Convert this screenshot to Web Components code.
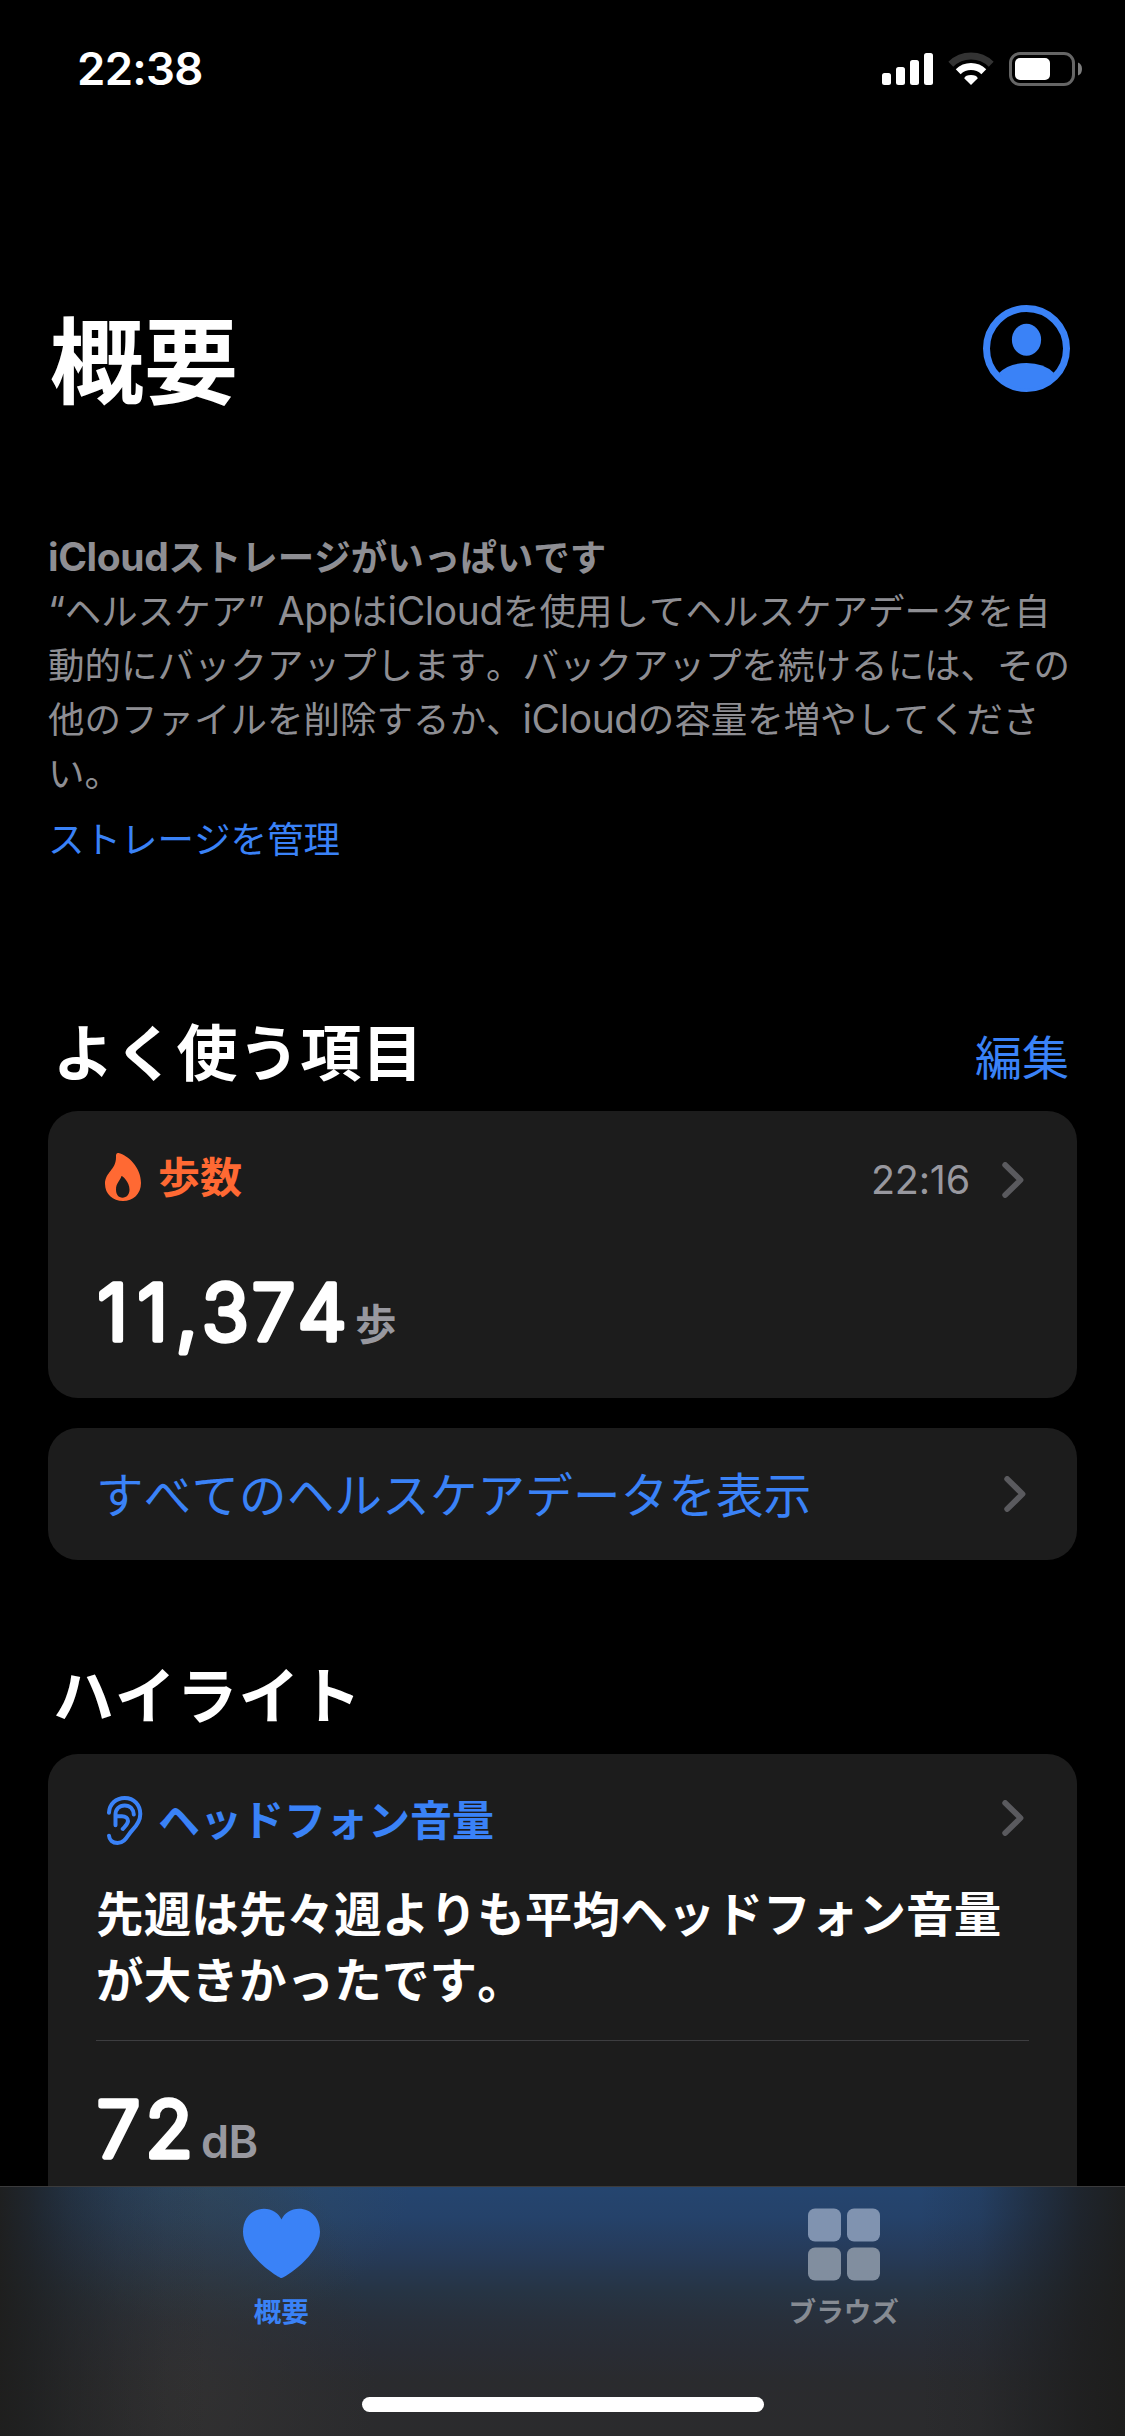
<!DOCTYPE html>
<html lang="ja">
<head>
<meta charset="utf-8">
<title>ヘルスケア</title>
<style>
html,body{margin:0;background:#000}
body{width:1125px;height:2436px;overflow:hidden;color:#fff;font-family:Inter,"Noto Sans CJK JP",sans-serif;font-kerning:none}
</style>
</head>
<body>
<health-app></health-app>
<script>
const define = (name, html) => {
  const t = document.createElement('template');
  t.innerHTML = html;
  customElements.define(name, class extends HTMLElement {
    constructor() {
      super();
      this.attachShadow({mode: 'open'}).append(t.content.cloneNode(true));
    }
  });
};

define('status-bar', `
<style>
:host{display:flex;height:138px;flex:none;align-items:center;justify-content:space-between;padding:0 43px 0 77px;box-sizing:border-box}
time{font-size:45.5px;font-weight:600;letter-spacing:-.7px;line-height:60px}
svg{display:block}
</style>
<time>22:38</time>
<svg width="200" height="34" viewBox="882 52 200 34">
  <g fill="#fff"><rect x="882" y="73" width="9" height="12" rx="2.5"/><rect x="896" y="67" width="9" height="18" rx="2.5"/><rect x="910" y="60" width="9" height="25" rx="2.5"/><rect x="924" y="53" width="9" height="32" rx="2.5"/></g>
  <g fill="none" stroke-width="7"><path stroke="#333" d="M950.8 64.3A29 29 0 0 1 991.2 64.3"/><path stroke="#fff" d="M958.2 71.7A18.4 18.4 0 0 1 983.8 71.7"/></g>
  <path fill="#fff" d="M971 85L964.2 78.2Q965.5 75 971 75T977.8 78.2Z"/>
  <rect x="1010.5" y="53.5" width="63" height="31" rx="9.5" fill="none" stroke="#666" stroke-width="3"/>
  <rect x="1015" y="58" width="35" height="22" rx="5" fill="#fff"/>
  <path fill="#7d7d7d" d="M1078 62.5Q1082 64 1082 69T1078 75.5Z"/>
</svg>`);

define('page-header', `
<style>
:host{display:flex;height:226px;flex:none;padding:0 55px 0 50px;align-items:flex-start;justify-content:space-between;margin-top:167px}
h1{margin:8px 0 0;font-size:94px;line-height:100px;font-weight:700}
</style>
<h1><slot></slot></h1>
<svg width="87" height="87" viewBox="0 0 87 87" fill="#3a82f7">
  <circle cx="43.5" cy="43.5" r="40" fill="none" stroke="#3a82f7" stroke-width="7"/>
  <ellipse cx="43.5" cy="34.8" rx="14.6" ry="16"/>
  <path d="M16 68Q26 58 43.5 58T71 68Q60 84 43.5 84T16 68Z"/>
</svg>`);

define('storage-notice', `
<style>
:host{display:block;flex:none;height:480px;padding:0 48px;font-size:36.5px;line-height:54px;color:#8e8e93;white-space:nowrap}
b,p{display:block;margin:0}
b{font-weight:700}
a{display:block;margin-top:12px;color:#3a82f7}
</style>
<b><slot name="title"></slot></b>
<p><slot></slot></p>
<a><slot name="link"></slot></a>`);

define('section-header', `
<style>
:host{display:flex;flex:none;height:100px;box-sizing:border-box;padding:0 56px 0 53px;justify-content:space-between}
h2{margin:3px 0 0;font-size:61px;line-height:80px;font-weight:700;letter-spacing:.8px}
span{margin-top:17px;font-size:47px;line-height:60px;color:#3a82f7}
</style>
<h2><slot></slot></h2><span><slot name="action"></slot></span>`);

define('health-card', `
<style>
:host{display:block;flex:none;box-sizing:border-box;margin:0 48px;padding:39px 48px 0;background:#1c1c1c;border-radius:30px}
</style><slot></slot>`);

define('disclosure-chevron', `
<style>:host{display:block;flex:none;width:22px;height:36px}svg{display:block}</style>
<svg width="22" height="36" viewBox="0 0 22 36" fill="none" stroke="#5a5a5e" stroke-width="5.8" stroke-linecap="round" stroke-linejoin="round"><path d="M3.2 3L18.5 18L3.2 33"/></svg>`);

define('card-title', `
<style>
:host{display:flex;height:54px;align-items:center;padding-right:5px}
.icon{display:flex;width:62px;padding-left:9px;box-sizing:border-box}
b{font-weight:700;font-size:42px;line-height:54px;flex:1;white-space:nowrap;color:var(--accent);margin-top:2px}
.time{font-size:39.5px;line-height:54px;color:#98989f;margin:5px 32px 0 0;letter-spacing:-.2px}
disclosure-chevron{margin-top:var(--chevron-shift,6px)}
</style>
<span class="icon"><slot name="icon"></slot></span><b><slot></slot></b><span class="time"><slot name="time"></slot></span><disclosure-chevron></disclosure-chevron>`);

define('flame-icon', `
<style>:host,svg{display:block}</style>
<svg width="36" height="48" viewBox="0 0 36 48"><path fill="#ff6933" fill-rule="evenodd" d="M13.5 0C23 2.5 36 14 36 30C36 41 28 48 18 48C8 48 0 41 0 31C0 19 11.5 17 11 3.5C10.8 1 12-.2 13.5 0ZM16.5 23C17.5 22.8 24.5 29 24.5 36.5C24.5 41.5 21.5 44.7 17.5 44.7C13.5 44.7 11 41.5 11 36.5C11 30 15 28 16.5 23Z"/></svg>`);

define('ear-icon', `
<style>:host,svg{display:block}:host{margin-left:2px}</style>
<svg width="36" height="49" viewBox="0 0 36 49" fill="none" stroke="#3a82f7" stroke-width="4" stroke-linecap="round" stroke-linejoin="round"><path d="M2 16.7C2.5 8 9 2 17.7 2C27 2 33.3 9 33.3 18C33.3 25 29.5 30 25 34.5C20.500 39 18.500 47 10.500 47C5.500 47 2.300 44 2 39.700M8.500 29.300V18.500C8.500 13 12.500 9.400 17.700 9.400C23 9.400 26.500 13 26.800 18.500M8.500 20.300H15C18.500 20.300 21 22.300 21 25C21 28.200 17.500 30.500 15.700 33"/></svg>`);

/* Value text: a thin face thickened by a round-joined stroke, for soft terminals. */
customElements.define('metric-value', class extends HTMLElement {
  connectedCallback() {
    const root = this.attachShadow({mode: 'open'});
    const w = this.getAttribute('width');
    root.innerHTML = `
<style>
:host{display:flex;height:80px;align-items:flex-start}
svg{display:block;overflow:visible}
text{font:300 77px Inter;fill:#fff;stroke:#fff;stroke-width:5.4px;stroke-linejoin:round;stroke-linecap:round}
span{font-size:var(--unit-size,41.5px);line-height:54px;font-weight:var(--unit-weight,700);color:#98989f;margin-top:var(--unit-top,24px);letter-spacing:-.5px}
</style>
<svg width="${w}" height="80"><text x="${this.getAttribute('xs')}" y="65.500">${this.getAttribute('value')}</text></svg><span><slot></slot></span>`;
  }
});

define('tab-item', `
<style>
:host{display:flex;flex:1;flex-direction:column;align-items:center;padding-top:21px;color:var(--tint)}
.i{height:73px}
b{margin-top:12px;font-size:27.6px;line-height:38px;font-weight:700}
</style>
<span class="i"><slot name="icon"></slot></span><b><slot></slot></b>`);

define('tab-bar', `
<style>
:host{display:flex;flex:none;flex-direction:column;align-items:center;height:250px;box-sizing:border-box;border-top:1px solid #3b3b3c;
background:
 linear-gradient(90deg,rgba(30,30,29,.96) 0,rgba(30,31,31,.82) 30px,rgba(31,32,32,.55) 70px,rgba(31,32,32,.25) 120px,rgba(31,32,32,.07) 165px,transparent 210px,transparent 920px,rgba(29,30,31,.15) 980px,rgba(29,30,31,.5) 1030px,rgba(29,29,29,.8) 1080px,rgba(29,29,28,.96) 1125px),
 radial-gradient(ellipse 190px 260px at 185px 190px,rgba(52,51,51,.7),transparent),
 radial-gradient(ellipse 200px 140px at 210px 0,rgba(52,78,92,.5),transparent),
 linear-gradient(#25456f 0,#25426a 30px,#263b5a 65px,#263444 105px,#282f3a 135px,#292c34 165px,#2a2b2e 195px,#2b2b2d 250px)}
nav{display:flex;width:100%;height:210px}
i{display:block;width:402px;height:15px;border-radius:8px;background:#fff}
svg{display:block}
</style>
<nav>
<tab-item style="--tint:#3a82f7"><svg slot="icon" width="77" height="72" viewBox="0 0 77 72"><path fill="#3a82f7" d="M38.500 70C35.500 70 0 47 0 24C0 10 9 .7 21 .7C29 .7 35.500 5 38.500 11.500C41.500 5 48 .7 56 .7C68 .7 77 10 77 24C77 47 41.500 70 38.500 70Z"/></svg>概要</tab-item>
<tab-item style="--tint:#868b93"><svg slot="icon" width="72" height="73" viewBox="0 0 72 73"><g fill="#8093b0"><rect y="0.500" width="33" height="33" rx="7"/><rect x="39" y="0.500" width="33" height="33" rx="7"/></g><g fill="#818e9f"><rect y="39.500" width="33" height="33" rx="7"/><rect x="39" y="39.500" width="33" height="33" rx="7"/></g></svg>ブラウズ</tab-item>
</nav>
<i></i>`);

define('health-app', `
<style>
:host{display:flex;flex-direction:column;width:1125px;height:2436px;background:#000}
main{display:flex;flex-direction:column;height:2048px;overflow:hidden}
.l{font-size:39px;letter-spacing:-.4px;line-height:1px;word-spacing:3px}
.steps{height:287px}
.all{height:132px;margin-top:30px;margin-bottom:94px;padding-top:0}
.row{display:flex;height:132px;align-items:center;justify-content:space-between;padding-right:3px;font-size:47.5px;letter-spacing:.2px;color:#3a82f7}
.row span{padding-bottom:4px}
.high{height:500px}
.msg{margin:35px 0 0;font-size:47.5px;font-weight:700;line-height:66px;white-space:nowrap;letter-spacing:.15px}
hr{border:0;height:1px;margin:26px 0 50px;background:#3d3d40}
</style>
<status-bar></status-bar>
<main>
<page-header>概要</page-header>
<storage-notice>
<span slot="title"><span class="l">iCloud</span>ストレージがいっぱいです</span><span class="l">“</span>ヘルスケア<span class="l">” App</span>は<span class="l">iCloud</span>を使用してヘルスケアデータを自<br>動的にバックアップします。バックアップを続けるには、その<br>他のファイルを削除するか、<span class="l">iCloud</span>の容量を増やしてくださ<br>い。<span slot="link">ストレージを管理</span>
</storage-notice>
<section-header>よく使う項目<span slot="action">編集</span></section-header>
<health-card class="steps">
<card-title style="--accent:#ff6933"><flame-icon slot="icon"></flame-icon>歩数<span slot="time">22:16</span></card-title>
<metric-value style="margin-top:70px" width="259" value="11,374" xs="1.5 41.500 80 106 156 202">歩</metric-value>
</health-card>
<health-card class="all"><div class="row"><span>すべてのヘルスケアデータを表示</span><disclosure-chevron></disclosure-chevron></div></health-card>
<section-header>ハイライト</section-header>
<health-card class="high">
<card-title style="--chevron-shift:-4px;--accent:#3a82f7"><ear-icon slot="icon"></ear-icon>ヘッドフォン音量</card-title>
<p class="msg">先週は先々週よりも平均ヘッドフォン音量<br>が大きかったです。</p>
<hr>
<metric-value style="--unit-size:45px;--unit-weight:600;--unit-top:24px" width="105" value="72" xs="1 49.500">dB</metric-value>
</health-card>
</main>
<tab-bar></tab-bar>`);
</script>
</body>
</html>
